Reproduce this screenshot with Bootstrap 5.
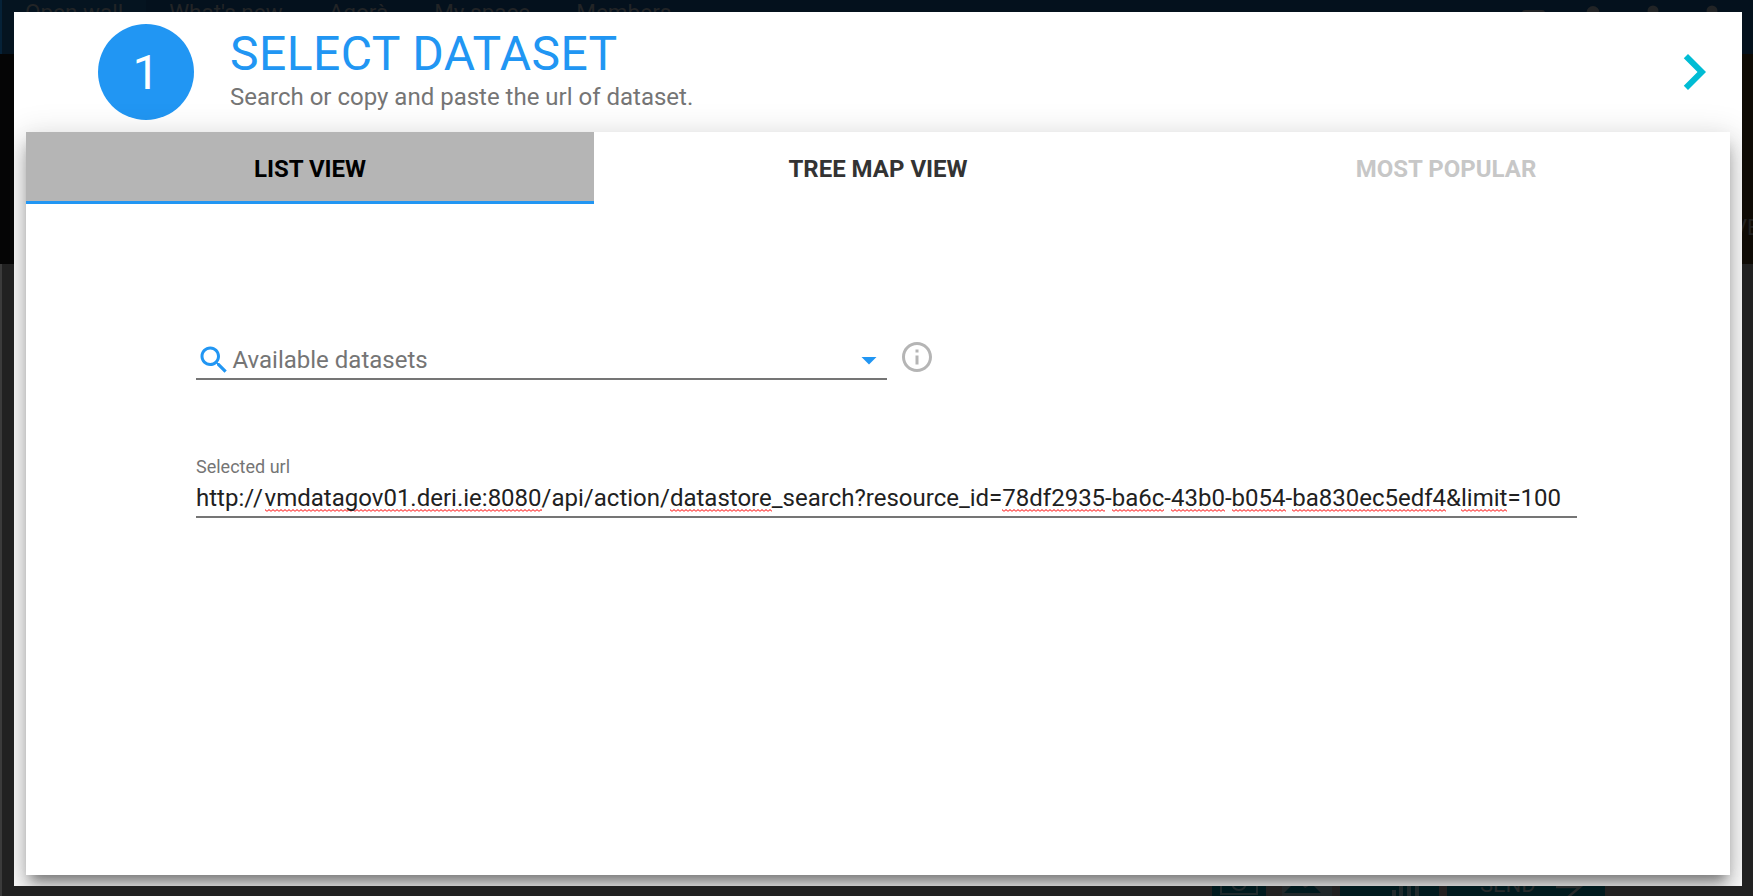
<!DOCTYPE html>
<html lang="en">
<head>
<meta charset="utf-8">
<title>Select dataset</title>
<link href="https://cdn.jsdelivr.net/npm/bootstrap@5.3.0/dist/css/bootstrap.min.css" rel="stylesheet">
<style>
body{font-family:Roboto,"Noto Sans",sans-serif;background:#212121;height:896px;overflow:hidden}
.page-nav{height:54px;background:#04111d;color:#222426;font-size:22.5px;line-height:22px;border-left:2px solid #062238}
.nav-cell{padding:1px 23px 0}
.nav-cell.current{background:#051420}
.nav-icons{width:240px;height:54px}
.hero-strip{height:210px;background:linear-gradient(90deg,#050505 0,#060504 60%,#0f0b05 100%)}
.hero-text{left:1733px;top:217px;color:#222;font-size:22px;line-height:22px}
.left-edge{left:0;top:264px;width:2px;bottom:0;background:#3b3b3b}
.composer{left:1212px;top:876px;height:20px;color:#262b2c;font-size:22px;line-height:18px}
.composer .tool{background:#001a1e;height:20px}
.tool.camera{width:54px}.tool.photo{width:50px}.tool.chart{width:99px}.tool.send{width:158px;padding-left:33px}
.wizard{left:14px;top:12px;width:1728px;height:874px;overflow:hidden;background:#fff;padding:0 12px 11px}
.wizard-head{height:120px;flex:none;padding-left:72px}
.step{width:96px;height:96px;background:#2196f3;font-size:48px;line-height:1;margin-right:36px;padding-top:2px}
.titles{margin-top:18px}
.headline{font-size:48px;line-height:48px;letter-spacing:.45px;color:#2196f3}
.subline{font-size:24px;line-height:28px;color:#757575;margin-top:5px}
.next{fill:#00bcd4}
.sheet{background:#fff;box-shadow:0 16px 24px 2px rgba(0,0,0,.14),0 6px 30px 5px rgba(0,0,0,.12),0 10px 12px -5px rgba(0,0,0,.42)}
.tab-cell{height:72px;font-size:24px;font-weight:700;line-height:28px;color:#333;border-bottom:3px solid transparent;padding-top:5px}
.tab-cell.current{background:#b5b5b5;color:#000;border-color:#2196f3}
.tab-cell.off{color:#c7c7c7}
.fields{padding:134px 153px 0 170px}
.picker{width:691px;height:42px;padding-top:4px;border-bottom:2px solid #757575;font-size:24px;color:#757575;line-height:36px}
.picker svg{fill:#2196f3}
.picker-text{margin-left:.5px}
.info{fill:#b5b5b5;margin:1px 0 0 12px}
.url-label{font-size:18px;line-height:22px;color:#757575;margin-top:76px}
.url-value{font-size:24px;line-height:36px;height:40px;padding-top:2px;border-bottom:2px solid #757575;color:#212121;white-space:nowrap}
.slashes{letter-spacing:1.6px}
.url-value u{text-decoration:none;background:url("data:image/svg+xml,%3Csvg xmlns='http://www.w3.org/2000/svg' width='4' height='3'%3E%3Cpath d='M-1 2.5L0 .7L2 2.3L4 .7L5 2.5' fill='none' stroke='red' stroke-width='.9'/%3E%3C/svg%3E") repeat-x 0 100%}
</style>
</head>
<body class="position-relative">
<div class="page-nav d-flex">
  <span class="nav-cell current">Open wall</span><span class="nav-cell">What's new</span><span class="nav-cell">Agorà</span><span class="nav-cell">My space</span><span class="nav-cell">Members</span>
  <svg class="nav-icons ms-auto" viewBox="0 0 240 54" fill="#222426"><rect x="9" y="10" width="23" height="16" rx="3"/><circle cx="80" cy="12.500" r="6.500"/><circle cx="140" cy="11" r="5.500"/><circle cx="199" cy="11" r="5.500"/></svg>
</div>
<div class="hero-strip"></div>
<div class="hero-text position-absolute">VE</div>
<div class="left-edge position-absolute"></div>
<div class="composer position-absolute d-flex">
  <div class="tool camera"><svg width="54" height="20" fill="none" stroke="#202b2d" stroke-width="2"><path d="M9 0V18H45V0"/><circle cx="27" cy="7" r="7"/></svg></div>
  <div class="tool photo ms-3"><svg width="50" height="20"><path d="M0 0H50V20H0Z" fill="#20282a"/><path d="M2 17L15 4L23 12L30 8L39 17Z" fill="#001a1e"/></svg></div>
  <div class="tool chart ms-2"><svg width="99" height="20" fill="none" stroke="#202b2d" stroke-width="4"><path d="M54 14V20M61 10V20M69 6V20M77 6V20"/></svg></div>
  <div class="tool send ms-2 d-flex">SEND<svg class="ms-3" width="36" height="20" fill="none" stroke="#262b2c" stroke-width="2.500"><path d="M4 11H28L15 22"/></svg></div>
</div>
<main class="wizard position-absolute d-flex flex-column">
  <header class="wizard-head d-flex align-items-center">
    <div class="step rounded-circle text-white d-flex align-items-center justify-content-center">1</div>
    <div class="titles align-self-start"><div class="headline">SELECT DATASET</div><div class="subline">Search or copy and paste the url of dataset.</div></div>
    <svg class="next ms-auto" width="72" height="72" viewBox="0 0 24 24"><path d="M10 6L8.590 7.410 13.170 12l-4.580 4.590L10 18l6-6z"/></svg>
  </header>
  <section class="sheet flex-grow-1">
    <div class="row g-0 text-center">
      <div class="col tab-cell current d-flex align-items-center justify-content-center">LIST VIEW</div>
      <div class="col tab-cell d-flex align-items-center justify-content-center">TREE MAP VIEW</div>
      <div class="col tab-cell off d-flex align-items-center justify-content-center">MOST POPULAR</div>
    </div>
    <div class="fields">
      <div class="d-flex align-items-start">
        <div class="picker d-flex">
          <svg width="36" height="36" viewBox="0 0 24 24"><path d="M15.500 14h-.790l-.280-.270C15.410 12.590 16 11.110 16 9.500 16 5.910 13.090 3 9.500 3S3 5.910 3 9.500 5.910 16 9.500 16c1.610 0 3.090-.590 4.230-1.570l.270.280v.790l5 4.990L20.490 19l-4.990-5zm-6 0C7.010 14 5 11.990 5 9.500S7.010 5 9.500 5 14 7.010 14 9.500 11.990 14 9.500 14z"/></svg>
          <span class="picker-text">Available datasets</span>
          <svg class="ms-auto" width="36" height="36" viewBox="0 0 24 24"><path d="M7 10l5 5 5-5z"/></svg>
        </div>
        <svg class="info" width="36" height="36" viewBox="0 0 24 24"><path d="M11 17h2v-6h-2v6zm1-15C6.480 2 2 6.480 2 12s4.480 10 10 10 10-4.480 10-10S17.520 2 12 2zm0 18c-4.410 0-8-3.590-8-8s3.590-8 8-8 8 3.590 8 8-3.590 8-8 8zM11 9h2V7h-2v2z"/></svg>
      </div>
      <div class="url-label">Selected url</div>
      <div class="url-value">http:<span class="slashes">//</span><u>vmdatagov01.deri.ie:8080</u>/api/action/<u>datastore</u>_search?resource_id=<u>78df2935</u>-<u>ba6c</u>-<u>43b0</u>-<u>b054</u>-<u>ba830ec5edf4</u>&amp;<u>limit</u>=100</div>
    </div>
  </section>
</main>
<script src="https://cdn.jsdelivr.net/npm/bootstrap@5.3.0/dist/js/bootstrap.bundle.min.js"></script>
</body>
</html>
